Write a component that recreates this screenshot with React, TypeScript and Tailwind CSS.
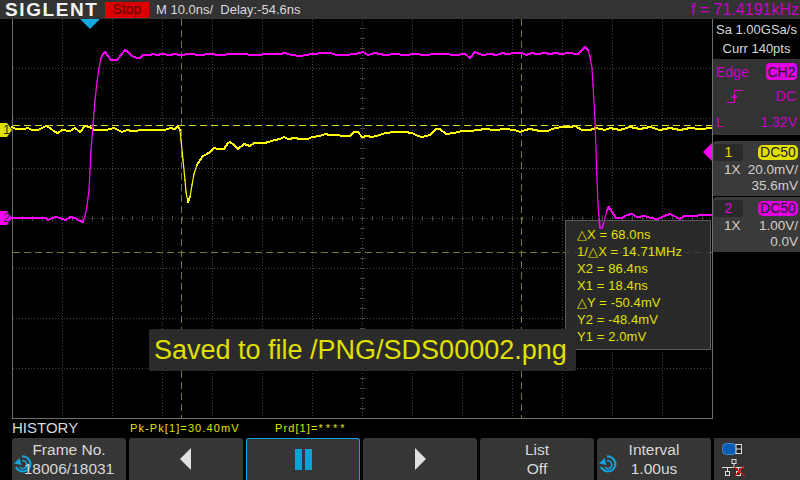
import React from 'react';

const FONT = "font-['Liberation_Sans',Arial,sans-serif]";

const magenta: [number, number][] = [
  [12, 218], [46, 218], [48, 220], [52, 218], [56, 217], [60, 218], [62, 219], [66, 220], [70, 217], [75, 218], [80, 221], [83, 222],
  [85, 216], [87, 206], [89, 190], [90, 170], [91, 150], [93, 125], [95, 100], [97, 82], [99, 68], [101, 58], [103, 54], [105, 52],
  [108, 56], [111, 60], [117, 60], [121, 55], [125, 50], [128, 52], [132, 56], [137, 58], [140, 58], [143, 55], [150, 55], [153, 54],
  [157, 55], [162, 54], [170, 55], [175, 54], [180, 55], [190, 54], [200, 55], [210, 54], [220, 55], [232, 54], [240, 54], [255, 55],
  [270, 54], [280, 54], [285, 53], [292, 55], [300, 56], [312, 54], [325, 53], [330, 53], [337, 55], [345, 55], [355, 54], [363, 52],
  [368, 55], [375, 53], [385, 55], [395, 54], [405, 55], [415, 54], [425, 55], [435, 54], [445, 54], [455, 55], [465, 54], [470, 58],
  [475, 52], [482, 55], [490, 54], [497, 55], [502, 53], [507, 54], [515, 53], [522, 53], [526, 55], [532, 53], [537, 54], [545, 53],
  [550, 54], [555, 53], [562, 54], [568, 53], [578, 54], [583, 49], [585, 47], [588, 50], [590, 57], [592, 68], [593, 85], [595, 120],
  [596, 150], [597, 180], [598, 205], [600, 228], [602, 228], [604, 222], [607, 210], [609, 207], [612, 212], [616, 218], [622, 218],
  [627, 215], [632, 214], [637, 217], [645, 216], [650, 218], [658, 219], [664, 216], [670, 214], [676, 217], [680, 219], [684, 216], [712, 215],
];

const yellow: [number, number][] = [
  [12, 127], [16, 129], [24, 129], [28, 128], [32, 130], [38, 130], [42, 128], [46, 126], [50, 128], [55, 132], [58, 133], [62, 130],
  [70, 131], [75, 128], [80, 132], [85, 126], [90, 127], [94, 130], [106, 130], [110, 129], [114, 128], [118, 130], [122, 132], [127, 130],
  [132, 131], [145, 130], [165, 130], [170, 128], [175, 129], [178, 126], [180, 130], [181, 140], [183, 160], [185, 180], [186, 192],
  [188, 202], [190, 197], [192, 185], [194, 174], [197, 165], [200, 160], [203, 156], [207, 154], [210, 152], [214, 148], [218, 149], [224, 149],
  [228, 143], [230, 142], [234, 145], [238, 149], [244, 144], [250, 146], [254, 143], [258, 143], [265, 143], [275, 140], [280, 139], [284, 137],
  [288, 139], [295, 138], [300, 139], [308, 139], [312, 137], [320, 136], [325, 134], [330, 135], [335, 135], [345, 136], [350, 136], [354, 132],
  [358, 132], [362, 137], [367, 136], [372, 137], [380, 135], [385, 133], [395, 132], [405, 132], [412, 133], [418, 136], [422, 137], [430, 135],
  [436, 129], [440, 129], [446, 134], [454, 133], [462, 131], [470, 131], [478, 130], [485, 129], [495, 130], [505, 129], [515, 130], [520, 132],
  [525, 130], [530, 129], [540, 131], [548, 131], [552, 129], [556, 128], [562, 127], [570, 127], [575, 126], [582, 130], [590, 130], [596, 128],
  [605, 130], [610, 128], [620, 130], [630, 127], [640, 129], [650, 127], [660, 130], [670, 128], [680, 130], [690, 128], [700, 129], [712, 128],
];

// steep edges come out thin on the scope, flat parts thick
function Trace({ pts, color }: { pts: [number, number][]; color: string }) {
  return (
    <g>
      {pts.slice(1).map(([x, y], i) => {
        const [px, py] = pts[i];
        const steep = Math.abs(y - py) > Math.abs(x - px) * 2.5;
        return (
          <line
            key={i}
            x1={px}
            y1={py}
            x2={x}
            y2={y}
            stroke={color}
            strokeWidth={steep ? 1.2 : 2}
            strokeLinecap="square"
            shapeRendering={steep ? undefined : 'crispEdges'}
          />
        );
      })}
    </g>
  );
}

function ScopeGrid() {
  const xs = Array.from({ length: 13 }, (_, i) => 62 + i * 50);
  const ys = [68, 118, 168, 218, 268, 318, 368];
  const tickXs = Array.from({ length: 69 }, (_, i) => 22 + i * 10);
  const tickYs = Array.from({ length: 39 }, (_, i) => 28 + i * 10);
  return (
    <svg className="absolute left-0 top-0" width="712" height="420" viewBox="0 19 712 420">
      {xs.map((x) => (
        <line key={x} x1={x + 0.5} y1="19" x2={x + 0.5} y2="418" stroke="#444" strokeDasharray="1 2" />
      ))}
      {ys.map((y) => (
        <line key={y} x1="13" y1={y + 0.5} x2="712" y2={y + 0.5} stroke="#444" strokeDasharray="1 2" />
      ))}
      {/* centre ticks */}
      {tickXs.map((x) => (
        <line key={x} x1={x + 0.5} y1="216" x2={x + 0.5} y2="221" stroke="#444" />
      ))}
      {tickYs.map((y) => (
        <line key={y} x1="360" y1={y + 0.5} x2="365" y2={y + 0.5} stroke="#444" />
      ))}
      <line x1="12.5" y1="19" x2="12.5" y2="418" stroke="#6e6e6e" />
      <line x1="12" y1="418.5" x2="712" y2="418.5" stroke="#6e6e6e" />
      {/* cursors */}
      <line x1="181.5" y1="19" x2="181.5" y2="418" stroke="#77772a" strokeDasharray="7 4" />
      <line x1="521.5" y1="19" x2="521.5" y2="418" stroke="#77772a" strokeDasharray="7 4" />
      <line x1="13" y1="125.5" x2="712" y2="125.5" stroke="#d8d820" strokeDasharray="7 4" />
      <line x1="13" y1="252.5" x2="712" y2="252.5" stroke="#77772a" strokeDasharray="7 4" />
      {/* traces */}
      <Trace pts={yellow} color="#ffff00" />
      <Trace pts={magenta} color="#ff00ff" />
      {/* trigger position, level and channel markers */}
      <polygon points="80,19 100,19 90,29" fill="#12a8e0" />
      <polygon points="703,152 712,143 712,161" fill="#ff00ff" />
      <polygon points="0,123 7,123 12,130 7,137 0,137" fill="#e0e000" />
      <polygon points="0,211 7,211 12,218 7,225 0,225" fill="#ff00ff" />
    </svg>
  );
}

function KnobIcon() {
  return (
    <svg className="absolute left-[2px] top-[17px]" width="18" height="18" viewBox="0 0 18 18">
      <path d="M8 1.5A7.5 7.5 0 1 1 2 12" fill="none" stroke="#12a0d8" strokeWidth="2.2" />
      <path d="M8 6A3.8 3.8 0 1 1 6 12" fill="none" stroke="#12a0d8" strokeWidth="1.6" />
      <polygon points="0,8.5 5.5,3 7.5,10" fill="#12a0d8" />
    </svg>
  );
}

function SoftKey({ children, active }: { children: React.ReactNode; active?: boolean }) {
  return (
    <div
      className={`relative flex h-[42px] w-[114px] flex-col items-center justify-center rounded-t-[3px] bg-[#363636] text-[15.5px] leading-[19px] text-[#d8d8d8] ${
        active ? 'border border-b-0 border-[#12a0d8]' : ''
      }`}
    >
      {children}
    </div>
  );
}

function ChannelPanel({ num, color, pill, scale, offset }: { num: string; color: string; pill: string; scale: string; offset: string }) {
  return (
    <div className="h-[55px] rounded-tl-[4px] bg-[#3a3a3a] pt-[3px] pr-[2px]">
      <div className="flex items-center justify-between">
        <div className={`ml-[1px] flex h-[17px] w-[29px] items-center justify-center rounded-r-[3px] bg-[#2a2a2a] text-[14px] ${color}`}>{num}</div>
        <div className={`flex h-[15px] w-[40px] items-center justify-center rounded-[5px] text-[14px] text-[#222] ${pill}`}>DC50</div>
      </div>
      <div className="mt-[1px] flex items-center justify-between pl-[11px] text-[13.5px] leading-[16px] text-[#cfcfcf]">
        <span>1X</span>
        <span>{scale}</span>
      </div>
      <div className="text-right text-[13.5px] leading-[16px] text-[#cfcfcf]">{offset}</div>
    </div>
  );
}

export default function App() {
  return (
    <div className={`flex h-[480px] w-[800px] flex-col overflow-hidden bg-black ${FONT}`}>
      {/* top bar */}
      <div className="flex h-[19px] shrink-0 items-center bg-[#333333]">
        <span className="ml-[5px] w-[99px] whitespace-nowrap text-[19px] font-bold leading-[19px] tracking-[1.6px] text-[#f2f2f2]">SIGLENT</span>
        <div className="ml-[1px] flex h-[16px] w-[44px] items-center justify-center bg-[#d80000] text-[14px] text-[#600000]">Stop</div>
        <span className="ml-[7px] whitespace-pre text-[13px] text-[#d8d8d8]">M 10.0ns/  Delay:-54.6ns</span>
        <span className="ml-auto mr-[1px] whitespace-pre text-[16px] text-[#c800c8]">f = 71.4191kHz</span>
      </div>

      {/* scope area */}
      <div className="flex h-[400px] shrink-0">
        <div className="relative h-full w-[712px] shrink-0">
          <ScopeGrid />
          <span className="absolute left-[3px] top-[103px] text-[13px] leading-[16px] text-[#333]">1</span>
          <span className="absolute left-[3px] top-[191px] text-[13px] leading-[16px] text-[#333]">2</span>

          {/* cursor readout */}
          <div className="absolute left-[565px] top-[201px] flex h-[130px] w-[146px] flex-col justify-center border border-[#5a5a5a] bg-[#303030]/85 pl-[11px] text-[13px] leading-[17px] tracking-[0.1px] text-[#e0e000]">
            <span>△X = 68.0ns</span>
            <span>1/△X = 14.71MHz</span>
            <span>X2 = 86.4ns</span>
            <span>X1 = 18.4ns</span>
            <span>△Y = -50.4mV</span>
            <span>Y2 = -48.4mV</span>
            <span>Y1 = 2.0mV</span>
          </div>
          {/* the trace dip stays in front of the readout */}
          <svg className="absolute left-[598px] top-[200px]" width="8" height="12" viewBox="598 219 8 12">
            <polyline points="599,219 600,228 602,228 604,222" fill="none" stroke="#ff00ff" strokeWidth="1.5" />
          </svg>

          {/* save notice */}
          <div className="absolute left-[149px] top-[310px] flex h-[42px] w-[427px] items-center rounded-[2px] bg-[#2b2b2b] pl-[5px] text-[27px] text-[#e0e000]">
            Saved to file /PNG/SDS00002.png
          </div>
        </div>

        {/* right panel */}
        <div className="flex w-[88px] shrink-0 flex-col border-l border-[#6e6e6e]">
          <div className="flex h-[40px] flex-col items-center justify-center text-[13px] leading-[19px] text-[#d8d8d8]">
            <span>Sa 1.00GSa/s</span>
            <span>Curr 140pts</span>
          </div>
          <div className="h-[76px] bg-[#333333] px-[3px] pt-[4px] text-[14px] leading-[16px] text-[#c800c8]">
            <div className="flex items-center justify-between">
              <span>Edge</span>
              <span className="flex h-[17px] w-[31px] items-center justify-center rounded-[4px] bg-[#e000e0] text-[14px] text-[#222]">CH2</span>
            </div>
            <div className="mt-[8px] flex h-[16px] items-center justify-between pl-[11px] pr-[1px]">
              <svg width="16" height="13" viewBox="0 0 16 13">
                <path d="M0 12.5H7.5V0.5H16" fill="none" stroke="#d000d0" />
                <polygon points="4,8 11,8 7.5,4" fill="#d000d0" />
              </svg>
              <span>DC</span>
            </div>
            <div className="mt-[10px] flex items-center justify-between">
              <span>L</span>
              <span>1.32V</span>
            </div>
          </div>
          <div className="h-[6px]" />
          <ChannelPanel num="1" color="text-[#e0e000]" pill="bg-[#e0e000]" scale="20.0mV/" offset="35.6mV" />
          <div className="h-[1px]" />
          <ChannelPanel num="2" color="text-[#e000e0]" pill="bg-[#e000e0]" scale="1.00V/" offset="0.0V" />
        </div>
      </div>

      {/* history label row */}
      <div className="flex h-[19px] shrink-0 items-center pl-[12px]">
        <span className="w-[118px] text-[15px] text-[#d8d8d8]">HISTORY</span>
        <span className="w-[145px] text-[11px] tracking-[1.1px] text-[#e0e000]">Pk-Pk[1]=30.40mV</span>
        <span className="text-[11px] tracking-[1.1px] text-[#e0e000]">
          Prd[1]=<span className="tracking-[3px]">****</span>
        </span>
      </div>

      {/* softkeys */}
      <div className="flex shrink-0 gap-[3px] pl-[12px]">
        <SoftKey>
          <KnobIcon />
          <span className="relative">Frame No.</span>
          <span className="relative">18006/18031</span>
        </SoftKey>
        <SoftKey>
          <svg width="12" height="22" viewBox="0 0 12 22">
            <polygon points="11,0 11,22 0,11" fill="#e0e0e0" />
          </svg>
        </SoftKey>
        <SoftKey active>
          <div className="flex gap-[3px]">
            <div className="h-[21px] w-[7px] bg-[#0aa0d8]" />
            <div className="h-[21px] w-[7px] bg-[#0aa0d8]" />
          </div>
        </SoftKey>
        <SoftKey>
          <svg width="12" height="22" viewBox="0 0 12 22">
            <polygon points="1,0 1,22 12,11" fill="#e0e0e0" />
          </svg>
        </SoftKey>
        <SoftKey>
          <span>List</span>
          <span>Off</span>
        </SoftKey>
        <SoftKey>
          <KnobIcon />
          <span>Interval</span>
          <span>1.00us</span>
        </SoftKey>
        <div className="flex h-[42px] w-[86px] flex-col gap-[4px] bg-[#333333] pl-[8px] pt-[5px]">
          <svg width="20" height="12" viewBox="0 0 20 12">
            <rect x="0.5" y="0.5" width="14" height="11" rx="4" fill="#0a5cb0" stroke="#3a8ee0" />
            <rect x="14" y="1.5" width="5.5" height="9" fill="#222" stroke="#ddd" />
            <line x1="14" y1="6" x2="20" y2="6" stroke="#ddd" />
          </svg>
          <svg width="24" height="18" viewBox="0 0 24 18">
            <rect x="10" y="0.5" width="4" height="4" fill="none" stroke="#ddd" />
            <path d="M12 4.5V8M0 8.5H22M5.5 8.5V12M16.5 8.5V12" fill="none" stroke="#ddd" />
            <rect x="3.5" y="12.5" width="4" height="4" fill="none" stroke="#ddd" />
            <rect x="14.5" y="12.5" width="4" height="4" fill="none" stroke="#ddd" />
            <path d="M12 8L23 17M22 7L13 17" stroke="#e01010" strokeWidth="1.3" />
          </svg>
        </div>
      </div>
    </div>
  );
}
